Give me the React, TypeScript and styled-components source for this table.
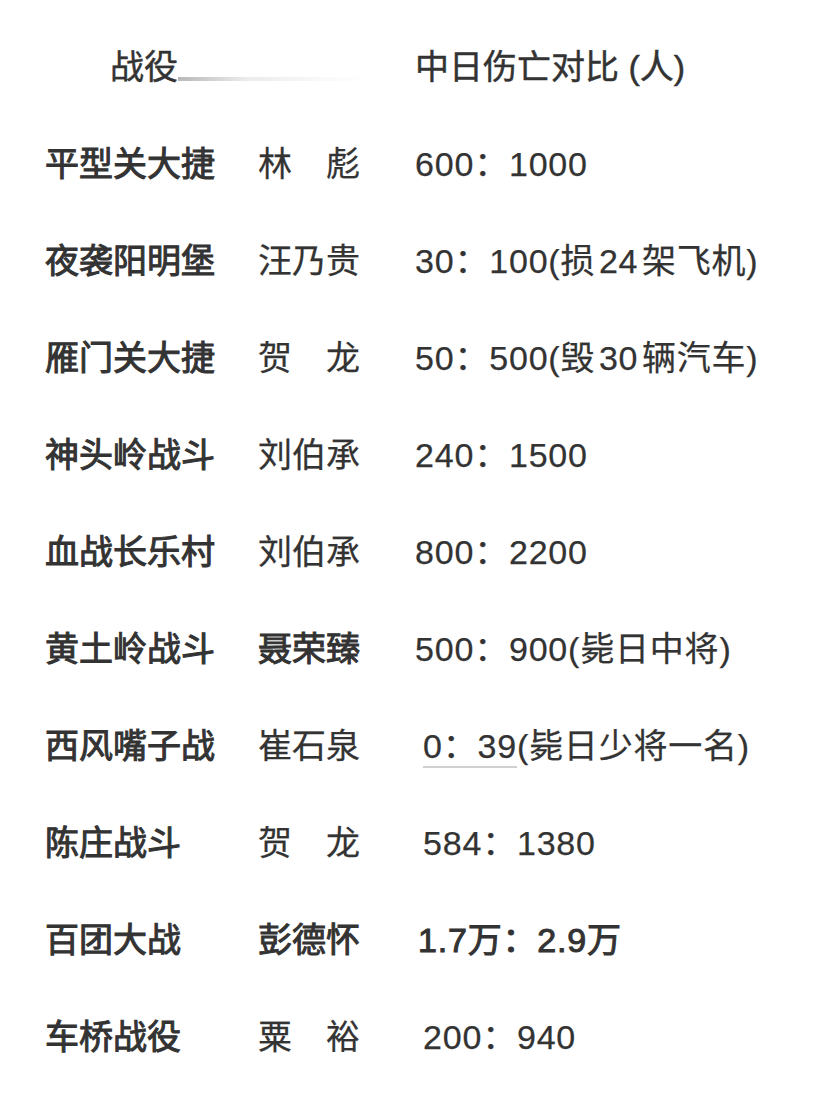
import React from 'react';
import styled, { createGlobalStyle, css } from 'styled-components';

const Global = createGlobalStyle`
  html, body { margin: 0; padding: 0; background: #ffffff; }
  body {
    font-family: "Liberation Sans", "Noto Sans CJK SC", sans-serif;
    color: #333333;
  }
`;

const strong = css`
  font-weight: 400;
  -webkit-text-stroke: 1px #333333;
`;

const normal = css`
  font-weight: 400;
  -webkit-text-stroke: 0.25px #333333;
`;

const Page = styled.div`
  width: 818px;
  min-height: 1107px;
  box-sizing: border-box;
  padding: 19px 0 0 45px;
  font-size: 34px;
  line-height: 1.2;
`;

const Table = styled.div`
  display: grid;
  grid-template-columns: 213px 157px auto;
  grid-auto-rows: 97px;
  align-items: center;
`;

const HeaderLead = styled.div`
  grid-column: 1 / span 2;
  display: flex;
  align-items: center;
  padding: 0 45px 0 65px;
`;

const HeaderText = styled.span`
  ${normal};
  -webkit-text-stroke: 0.45px #333333;
  white-space: nowrap;
`;

const Fade = styled.span`
  flex: 1;
  height: 4px;
  margin-top: 24px;
  background: linear-gradient(
    to right,
    rgba(0, 0, 0, 0.28),
    rgba(0, 0, 0, 0.08) 35%,
    rgba(0, 0, 0, 0.02) 80%,
    rgba(0, 0, 0, 0)
  );
`;

const Battle = styled.div`
  ${strong};
  white-space: nowrap;
`;

const Commander = styled.div<{ $bold?: boolean }>`
  ${(p) => (p.$bold ? strong : normal)};
  white-space: nowrap;
`;

const Ratio = styled.div<{ $bold?: boolean; $indent?: number }>`
  ${(p) => (p.$bold ? strong : normal)};
  padding-left: ${(p) => p.$indent ?? 0}px;
  letter-spacing: 0.8px;
  white-space: nowrap;
`;

const Marked = styled.span`
  border-bottom: 2px solid #d0d0d0;
  padding-bottom: 1px;
`;

type Row = {
  battle: string;
  commander: string;
  ratio: React.ReactNode;
  boldCommander?: boolean;
  boldRatio?: boolean;
  indent?: number;
};

const rows: Row[] = [
  { battle: '平型关大捷', commander: '林\u3000彪', ratio: '600：1000' },
  { battle: '夜袭阳明堡', commander: '汪乃贵', ratio: '30：100(损\u200a24\u200a架飞机)' },
  { battle: '雁门关大捷', commander: '贺\u3000龙', ratio: '50：500(毁\u200a30\u200a辆汽车)' },
  { battle: '神头岭战斗', commander: '刘伯承', ratio: '240：1500' },
  { battle: '血战长乐村', commander: '刘伯承', ratio: '800：2200' },
  { battle: '黄土岭战斗', commander: '聂荣臻', ratio: '500：900(毙日中将)', boldCommander: true },
  {
    battle: '西风嘴子战',
    commander: '崔石泉',
    ratio: (
      <>
        <Marked>0：39</Marked>(毙日少将一名)
      </>
    ),
    indent: 8,
  },
  { battle: '陈庄战斗', commander: '贺\u3000龙', ratio: '584：1380', indent: 8 },
  {
    battle: '百团大战',
    commander: '彭德怀',
    ratio: '1.7万：2.9万',
    boldCommander: true,
    boldRatio: true,
    indent: 3,
  },
  { battle: '车桥战役', commander: '粟\u3000裕', ratio: '200：940', indent: 8 },
];

export default function App() {
  return (
    <>
      <Global />
      <Page>
        <Table>
          <HeaderLead>
            <HeaderText>战役</HeaderText>
            <Fade />
          </HeaderLead>
          <HeaderText>中日伤亡对比 (人)</HeaderText>
          {rows.map((r) => (
            <React.Fragment key={r.battle}>
              <Battle>{r.battle}</Battle>
              <Commander $bold={r.boldCommander}>{r.commander}</Commander>
              <Ratio $bold={r.boldRatio} $indent={r.indent}>
                {r.ratio}
              </Ratio>
            </React.Fragment>
          ))}
        </Table>
      </Page>
    </>
  );
}
